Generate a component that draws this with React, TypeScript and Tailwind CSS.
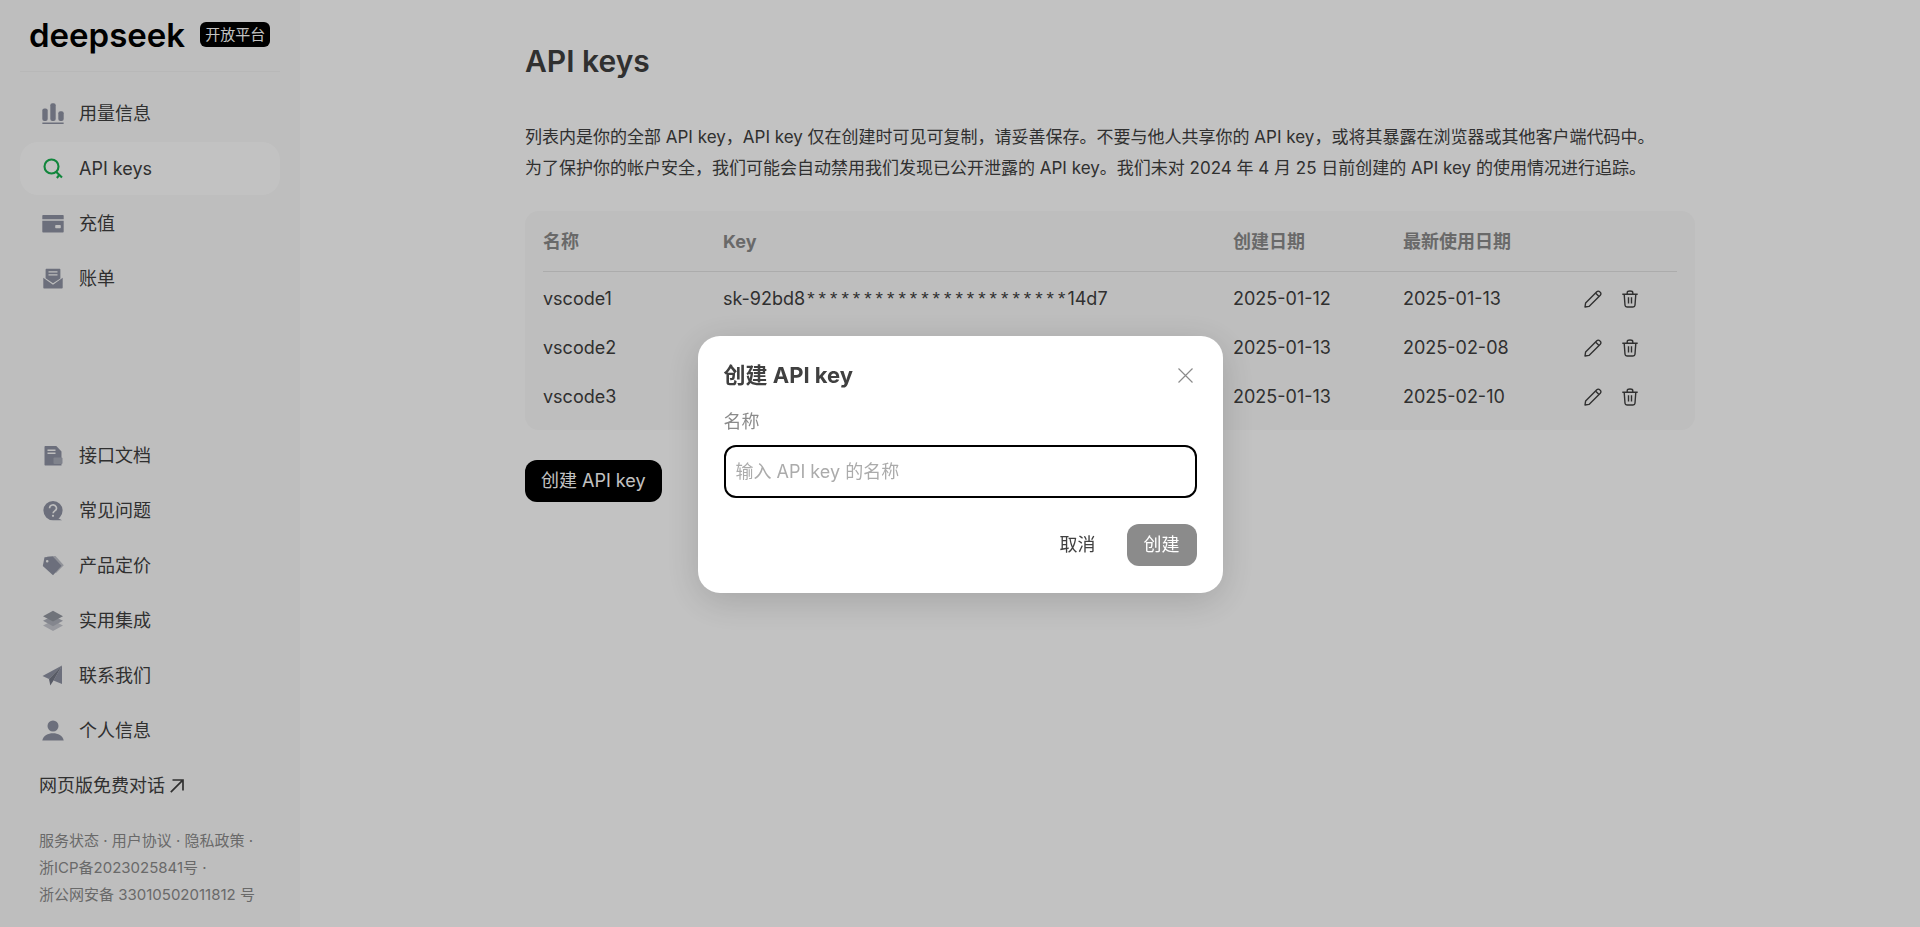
import React from "react";

type IconProps = { children: React.ReactNode };

function NavIcon({ children }: IconProps) {
  return (
    <svg width="22" height="22" viewBox="0 0 22 22" fill="#8f93a3" aria-hidden="true" className="shrink-0">
      {children}
    </svg>
  );
}

const topItems = [
  {
    label: "用量信息",
    icon: (
      <NavIcon>
        <rect x="0.3" y="5.500" width="5.400" height="12.500" rx="2" />
        <rect x="8.300" y="0.3" width="5.400" height="17.700" rx="2" />
        <rect x="16.300" y="8.300" width="5.400" height="9.700" rx="2" />
        <rect x="0.3" y="19.400" width="21.400" height="1.500" rx="0.4" />
      </NavIcon>
    ),
  },
  {
    label: "API keys",
    active: true,
    icon: (
      <NavIcon>
        <g fill="none" stroke="#17b04f" strokeWidth="2.100">
          <circle cx="9.500" cy="8.500" r="7" />
          <path d="M13.800 13.500l6.200 6M17.300 16.800l-2.400 3.200" />
        </g>
      </NavIcon>
    ),
  },
  {
    label: "充值",
    icon: (
      <NavIcon>
        <path d="M1.3 2h19.4c.6 0 1 .4 1 1v3.300H.3V3c0-.6.4-1 1-1z" />
        <path fillRule="evenodd" d="M.3 7.700h21.400v10.900c0 .6-.4 1-1 1H1.300c-.6 0-1-.4-1-1zM14 12c-.5 0-.8.3-.8.800v1.600c0 .5.3.8.8.800h4c.5 0 .8-.3.8-.8v-1.600c0-.5-.3-.8-.8-.8z" />
      </NavIcon>
    ),
  },
  {
    label: "账单",
    icon: (
      <NavIcon>
        <path fillRule="evenodd" d="M4.600.800h12.800c.6 0 1 .4 1 1v8.700L11 15.300l-7.400-5V1.800c0-.6.4-1 1-1zM6.500 3.300v1.300h9V3.300zm0 3v1.300h9V6.300z" />
        <path d="M1.300 9.800L11 16.800l9.700-7v9.600c0 .6-.4 1-1 1H2.300c-.6 0-1-.4-1-1z" />
      </NavIcon>
    ),
  },
];

const bottomItems = [
  {
    label: "接口文档",
    icon: (
      <NavIcon>
        <path fillRule="evenodd" d="M3.500 1h10.800L19.500 6.500V20.500H3.500c-.6 0-1-.4-1-1V2c0-.6.4-1 1-1zM5.500 4.600v1.300h8V4.600zm0 3v1.300h8V7.600z" />
        <rect x="11.500" y="12.500" width="9" height="6.500" rx="1" fill="#a9acb9" />
      </NavIcon>
    ),
  },
  {
    label: "常见问题",
    icon: (
      <NavIcon>
        <path d="M11 1a9.600 9.600 0 1 1 0 19.200A9.600 9.600 0 0 1 11 1zM14 17l6 3.200h-7z" />
        <path d="M7.600 8.200a3.400 3.200 0 1 1 5.200 2.600c-1.200.8-1.700 1.200-1.700 2.500" fill="none" stroke="#fafafa" strokeWidth="1.600" />
        <circle cx="11" cy="15.800" r="1.100" fill="#fafafa" />
      </NavIcon>
    ),
  },
  {
    label: "产品定价",
    icon: (
      <NavIcon>
        <path d="M5 1.400L13.500 1l8.300 9.200-8 8z" fill="#bfc1ca" />
        <path fillRule="evenodd" d="M2.500 2.300L10.800 1.400l8.700 9.300L11 20.300.8 11zM5.200 5a1.300 1.300 0 1 0 0 2.600A1.300 1.300 0 0 0 5.200 5z" />
      </NavIcon>
    ),
  },
  {
    label: "实用集成",
    icon: (
      <NavIcon>
        <path d="M1 15.500l10-5 10 5-10 5.500z" fill="#c8cad1" />
        <path d="M1 10.800l10-5 10 5-10 5.500z" fill="#aeb1bb" />
        <path d="M1 6.200l10-5.400 10 5.400-10 5.300z" fill="#9498a1" />
      </NavIcon>
    ),
  },
  {
    label: "联系我们",
    icon: (
      <NavIcon>
        <path d="M20 0.500L0.500 11l6.500 3L20 0.500z" />
        <path d="M20 0.500L11.500 15.500l8.500 3.500z" />
        <path d="M20 0.500L7 14l1.300 6.500 3.200-5z" fill="#747887" />
      </NavIcon>
    ),
  },
  {
    label: "个人信息",
    icon: (
      <NavIcon>
        <circle cx="11" cy="6" r="5.500" />
        <path d="M.3 20.500C1.200 15.500 6 13.300 11 13.300s9.800 2.200 10.700 7.200z" />
      </NavIcon>
    ),
  },
];

type KeyRow = { name: string; prefix?: string; mask?: string; suffix?: string; created: string; used: string };

const rows: KeyRow[] = [
  { name: "vscode1", prefix: "sk-92bd8", mask: "***********************", suffix: "14d7", created: "2025-01-12", used: "2025-01-13" },
  { name: "vscode2", created: "2025-01-13", used: "2025-02-08" },
  { name: "vscode3", created: "2025-01-13", used: "2025-02-10" },
];

function NavList({ items }: { items: { label: string; icon: React.ReactNode; active?: boolean }[] }) {
  return (
    <ul className="flex flex-col gap-[2px]">
      {items.map((item) => (
        <li key={item.label}>
          <a
            href="#"
            className={`flex h-[53px] items-center gap-[15px] rounded-[18px] pl-[22px] ${item.active ? "bg-white" : ""}`}
          >
            {item.icon}
            <span>{item.label}</span>
          </a>
        </li>
      ))}
    </ul>
  );
}

function PencilIcon() {
  return (
    <svg width="18" height="18" viewBox="0 0 18 18" fill="none" stroke="currentColor" strokeWidth="1.400" strokeLinejoin="round" aria-hidden="true">
      <path d="M1 17l.6-4L12.800 1.700a2 2 0 0 1 2.900 0l.6.600a2 2 0 0 1 0 2.900L5 16.400z" />
      <path d="M11.700 3.200l3.100 3.100" />
    </svg>
  );
}

function TrashIcon() {
  return (
    <svg width="16" height="18" viewBox="0 0 16 18" fill="none" stroke="currentColor" strokeWidth="1.400" aria-hidden="true">
      <path d="M.3 4.300h15.400M5.200 4V2.700C5.200 1.600 6 1 8 1s2.800.600 2.800 1.700V4M2.200 4.300l.8 10.900c.1 1.300.8 1.800 2 1.800h6c1.200 0 1.900-.5 2-1.800l.8-10.900M6.500 7.300v6.200M9.500 7.300v6.200" />
    </svg>
  );
}

export default function App() {
  return (
    <div className="flex min-h-screen bg-white font-['Inter','Noto_Sans_CJK_SC',sans-serif] text-lg text-[#404040]">
      <aside className="flex w-[300px] shrink-0 flex-col bg-[#fafafa] px-5">
        <div className="flex h-[72px] items-center gap-[15px] border-b border-[#f2f2f2] pb-[2px] pl-[9px] text-black">
          <span className="text-[33px] leading-10 font-semibold">deepseek</span>
          <span className="rounded-md bg-black px-[5px] text-[15px] leading-[25px] text-white">开放平台</span>
        </div>
        <nav className="flex flex-1 flex-col justify-between pt-[15px]">
          <NavList items={topItems} />
          <NavList items={bottomItems} />
        </nav>
        <a href="#" className="mt-[2px] flex h-[53px] items-center gap-[5px] pl-[19px]">
          网页版免费对话
          <svg width="14" height="14" viewBox="0 0 14 14" fill="none" stroke="currentColor" strokeWidth="1.700" aria-hidden="true">
            <path d="M.8 13.200L12.800 1.200M2.500 1h10.500v10.500" />
          </svg>
        </a>
        <footer className="pt-[15px] pb-[19px] pl-[19px] text-[15px] leading-[27px] text-[#8b8b8b]">
          <p><a href="#">服务状态</a> · <a href="#">用户协议</a> · <a href="#">隐私政策</a> ·</p>
          <p><a href="#">浙ICP备2023025841号</a> ·</p>
          <p><a href="#">浙公网安备 33010502011812 号</a></p>
        </footer>
      </aside>

      <main className="flex-1">
        <div className="mx-auto w-full max-w-[1170px] pt-[42px]">
          <h1 className="text-[30px] leading-[38px] font-semibold">API keys</h1>
          <div className="mt-[42px] text-[17px] leading-[31px]">
            <p>列表内是你的全部 API key，API key 仅在创建时可见可复制，请妥善保存。不要与他人共享你的 API key，或将其暴露在浏览器或其他客户端代码中。</p>
            <p>为了保护你的帐户安全，我们可能会自动禁用我们发现已公开泄露的 API key。我们未对 2024 年 4 月 25 日前创建的 API key 的使用情况进行追踪。</p>
          </div>
          <div className="mt-[27px] rounded-[14px] bg-[#fafafa] px-[18px] pb-[12px]">
            <table className="w-full table-fixed text-left">
              <thead>
                <tr className="h-[60px] border-b border-[#e2e2e2] text-[#8b8b8b]">
                  <th className="w-[180px] pt-[3px] font-bold">名称</th>
                  <th className="pt-[3px] font-bold">Key</th>
                  <th className="w-[170px] pt-[3px] font-bold">创建日期</th>
                  <th className="w-[181px] pt-[3px] font-bold">最新使用日期</th>
                  <th className="w-[93px]"></th>
                </tr>
              </thead>
              <tbody>
                {rows.map((row) => (
                  <tr key={row.name} className="h-[49px]">
                    <td className="pt-[7px]">{row.name}</td>
                    <td className="pt-[7px] leading-7">
                      {row.prefix}
                      <span className="font-['Liberation_Mono',monospace] text-[19px] leading-none">{row.mask}</span>
                      {row.suffix}
                    </td>
                    <td className="pt-[7px]">{row.created}</td>
                    <td className="pt-[7px]">{row.used}</td>
                    <td className="pt-[7px]">
                      <div className="flex items-center gap-5">
                        <button type="button" aria-label="编辑"><PencilIcon /></button>
                        <button type="button" aria-label="删除"><TrashIcon /></button>
                      </div>
                    </td>
                  </tr>
                ))}
              </tbody>
            </table>
          </div>
          <button type="button" className="mt-[30px] h-[42px] rounded-xl bg-black px-[16px] text-white">创建 API key</button>
        </div>
      </main>

      <div className="fixed inset-0 flex items-center justify-center bg-black/24 pt-[2px]">
        <form role="dialog" aria-labelledby="dialog-title" className="w-[525px] rounded-[22px] bg-white px-[26px] pt-[24px] pb-[27px] shadow-[0_8px_36px_rgba(0,0,0,0.16)]">
          <div className="flex items-center justify-between pr-1">
            <h2 id="dialog-title" className="text-[22px] leading-[30px] font-bold">创建 API key</h2>
            <button type="button" aria-label="关闭" className="text-[#8b8b8b]">
              <svg width="15" height="15" viewBox="0 0 15 15" fill="none" stroke="currentColor" strokeWidth="1.200" aria-hidden="true">
                <path d="M.5.5l14 14M14.500.500l-14 14" />
              </svg>
            </button>
          </div>
          <label htmlFor="key-name" className="mt-[18px] block leading-7 text-[#8b8b8b]">名称</label>
          <input id="key-name" type="text" placeholder="输入 API key 的名称" className="mt-[9px] block h-[53px] w-full rounded-xl border-[2px] border-black px-[10px] outline-none placeholder:text-[#ababab]" />
          <div className="mt-[26px] flex justify-end gap-[14px]">
            <button type="button" className="h-[42px] px-[17px]">取消</button>
            <button type="submit" disabled className="h-[42px] rounded-xl bg-[#8b8b8b] px-[17px] text-white">创建</button>
          </div>
        </form>
      </div>
    </div>
  );
}
